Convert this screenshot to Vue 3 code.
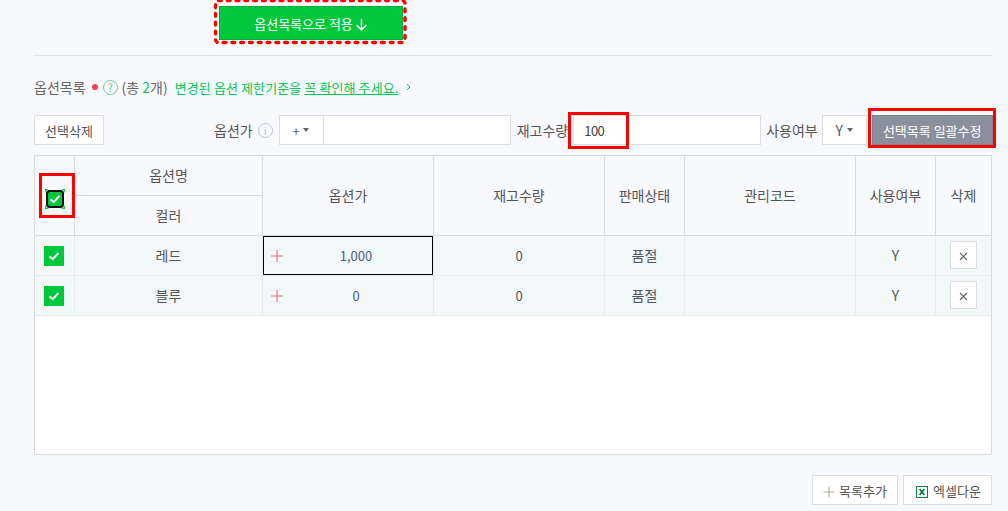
<template>
  <div class="page">
    <div class="apply-row">
      <div class="apply-wrap">
        <button class="apply-btn">옵션목록으로 적용
          <svg width="13" height="13" viewBox="0 0 12 12"><path d="M6 1v10M1.5 6.5 6 11l4.5-4.5" fill="none" stroke="#fff" stroke-width="1.4"/></svg>
        </button>
        <svg class="dash" width="198" height="48" viewBox="0 0 198 48"><rect x="3.5" y="1.5" width="189.5" height="42" rx="3" fill="none" stroke="#f00" stroke-width="3.4" stroke-dasharray="2.8 6" stroke-linecap="round"/></svg>
      </div>
    </div>

    <div class="title-row">
      <span class="title">옵션목록</span>
      <i class="dot"></i>
      <span class="help">?</span>
      <span class="count">(총 <em>2</em>개)</span>
      <span class="notice">변경된 옵션 제한기준을 <u>꼭 확인해 주세요.</u></span>
      <svg class="chev" width="5" height="8" viewBox="0 0 5 8"><path d="M1 1l3 3-3 3" fill="none" stroke="#06c755" stroke-width="1"/></svg>
    </div>

    <div class="toolbar">
      <button class="btn del-btn">선택삭제</button>
      <label class="lbl price-lbl">옵션가</label>
      <span class="info">i</span>
      <div class="sel sign-sel">+<i class="caret"></i></div>
      <div class="inp price-inp"></div>
      <label class="lbl stock-lbl">재고수량</label>
      <div class="inp stock-inp">100<span class="mark stock-mark"></span></div>
      <label class="lbl use-lbl">사용여부</label>
      <div class="sel use-sel">Y<i class="caret"></i></div>
      <div class="bulk-wrap">
        <button class="bulk-btn">선택목록 일괄수정</button>
        <span class="mark bulk-mark"></span>
      </div>
    </div>

    <div class="grid-box">
      <table class="grid">
        <colgroup>
          <col v-for="w in colWidths" :key="w.k" :style="{ width: w.w + 'px' }">
        </colgroup>
        <thead>
          <tr>
            <th rowspan="2" class="chk-cell">
              <div class="head-chk">
                <span class="chk focused"><svg width="14" height="14" viewBox="0 0 14 14"><path d="M2.5 7.2 5.7 10.2 11.5 3.9" fill="none" stroke="#fff" stroke-width="2"/></svg></span>
                <span class="mark chk-mark"></span>
              </div>
            </th>
            <th>옵션명</th>
            <th rowspan="2">옵션가</th>
            <th rowspan="2">재고수량</th>
            <th rowspan="2">판매상태</th>
            <th rowspan="2">관리코드</th>
            <th rowspan="2">사용여부</th>
            <th rowspan="2">삭제</th>
          </tr>
          <tr><th>컬러</th></tr>
        </thead>
        <tbody>
          <tr v-for="(r, i) in rows" :key="r.name">
            <td class="first">
              <span class="chk"><svg width="14" height="14" viewBox="0 0 14 14"><path d="M2.5 7.2 5.7 10.2 11.5 3.9" fill="none" stroke="#fff" stroke-width="2"/></svg></span>
            </td>
            <td>{{ r.name }}</td>
            <td class="price" :class="{ active: i === 0 }">
              <svg class="plus" width="12" height="12" viewBox="0 0 12 12"><path d="M6 0v12M0 6h12" stroke="#f0657d" stroke-width="1"/></svg>
              <span class="num">{{ r.price }}</span>
            </td>
            <td class="num">0</td>
            <td>품절</td>
            <td></td>
            <td>Y</td>
            <td class="x-cell"><button class="x-btn"><svg width="9" height="9" viewBox="0 0 9 9"><path d="M1 1l7 7M8 1 1 8" stroke="#666" stroke-width="1.1"/></svg></button></td>
          </tr>
        </tbody>
      </table>
    </div>

    <div class="bottom">
      <button class="btn add-btn"><svg width="12" height="12" viewBox="0 0 12 12"><path d="M6 .5v11M.5 6h11" stroke="#b5b09c" stroke-width="1.2"/></svg>목록추가</button>
      <button class="btn xls-btn">
        <svg width="12" height="12" viewBox="0 0 12 12"><rect x=".5" y=".5" width="11" height="11" fill="#fff" stroke="#107c41"/><path d="M3.6 3 8.4 9M8.4 3 3.6 9" stroke="#107c41" stroke-width="1.8"/></svg>엑셀다운
      </button>
    </div>
  </div>
</template>

<script setup>
const colWidths = [
  { k: 'chk', w: 39 }, { k: 'name', w: 188 }, { k: 'price', w: 171 }, { k: 'stock', w: 171 },
  { k: 'state', w: 80 }, { k: 'code', w: 171 }, { k: 'use', w: 80 }, { k: 'del', w: 56 }
]
const rows = [
  { name: '레드', price: '1,000' },
  { name: '블루', price: '0' }
]
</script>

<style>
html, body { margin: 0; background: #f8f9fd; }
</style>

<style scoped>
.page {
  width: 1008px;
  height: 511px;
  overflow: hidden;
  box-sizing: border-box;
  padding: 0 16px 0 34px;
  background: #f8f9fd;
  font-family: "Noto Sans CJK KR", "Noto Sans", sans-serif;
  font-size: 14px;
  color: #555;
}
button { font: inherit; font-size: 13px; cursor: pointer; }

.apply-row {
  border-bottom: 1px solid #e6e7ec;
  padding-left: 185px;
  height: 49px;
  padding-top: 6px;
}
.apply-wrap {
  position: relative;
  width: 184px;
  height: 34px;
}
.apply-btn {
  width: 100%;
  height: 100%;
  padding: 0;
  border: 1px solid #00a843;
  background: #00c73c;
  color: #fff;
}
.apply-btn svg { margin-left: -1px; vertical-align: -2px; }
.dash { position: absolute; left: -7px; top: -7px; pointer-events: none; }

.title-row {
  display: flex;
  align-items: center;
  height: 20px;
  margin-top: 21px;
}
.title { color: #666; }
.dot { width: 6px; height: 6px; border-radius: 50%; background: #f5405a; margin: 0 5px 0 6px; }
.help {
  box-sizing: border-box;
  width: 15px; height: 15px; border: 1px solid #6cc795; border-radius: 50%;
  color: #6cc795; font-size: 11px; line-height: 13px; text-align: center; margin-right: 4px;
}
.count { color: #666; }
.count em { font-style: normal; color: #06c755; }
.notice { color: #06c755; margin-left: 7px; font-size: 13px; letter-spacing: .1px; }
.chev { margin-left: 7px; }

.toolbar {
  display: flex;
  align-items: center;
  height: 30px;
  margin-top: 18px;
}
.toolbar > * { flex: none; }
.btn {
  height: 30px;
  box-sizing: border-box;
  background: #fff;
  border: 1px solid #dcdde2;
  color: #555;
  padding: 0;
}
.del-btn { width: 70px; }
.lbl { color: #555; }
.price-lbl { margin-left: 110px; }
.info {
  box-sizing: border-box;
  width: 15px; height: 15px; border: 1px solid #bcc5d3; border-radius: 50%;
  color: #bcc5d3; font-size: 11px; line-height: 13px; text-align: center; margin: 0 6px 0 5px;
}
.sel, .inp {
  position: relative;
  height: 30px;
  box-sizing: border-box;
  background: #fff;
  border: 1px solid #dcdde2;
  display: flex;
  align-items: center;
  color: #555;
}
.sel { justify-content: center; }
.caret {
  width: 0; height: 0; margin-left: 4px;
  border-style: solid;
  border-width: 4px 3.5px 0;
  border-color: #666 transparent transparent;
}
.sign-sel { width: 45px; font-size: 12px; }
.price-inp { width: 187px; border-left: 0; }
.stock-lbl { margin-left: 6px; }
.stock-inp { width: 188px; margin-left: 5px; padding-left: 10px; font-size: 13px; letter-spacing: -.5px; color: #444; }
.use-lbl { margin-left: 5px; }
.use-sel { width: 45px; margin-left: 4px; }
.mark { position: absolute; border: 3px solid #f00; box-sizing: border-box; pointer-events: none; }
.stock-mark { left: -6px; top: -4px; width: 61px; height: 37px; }
.bulk-wrap { position: relative; margin-left: 5px; }
.bulk-btn {
  display: block;
  width: 121px;
  height: 30px;
  border: 1px solid #7c8190;
  background: #8a8f9e;
  color: #fff;
  padding: 0;
}
.bulk-mark { left: -4px; top: -7px; width: 128px; height: 40px; }

.grid-box {
  margin-top: 10px;
  height: 300px;
  box-sizing: border-box;
  background: #fff;
  border: 1px solid #d8dae0;
}
.grid {
  border-collapse: collapse;
  table-layout: fixed;
  width: 956px;
}
.grid th, .grid td {
  text-align: center;
  padding: 0 0 0 1px;
  font-weight: 400;
  height: 40px;
  box-sizing: border-box;
}
.grid thead tr:first-child th { height: 39px; }
.grid th { background: #f8f9fd; border: 1px solid #d8dae0; color: #555; }
.grid td { background: #f2f8f7; border: 1px solid #e8ebee; color: #555; }
.grid tr > :first-child { border-left: 0; }
.grid thead tr:first-child th { border-top: 0; }
.grid tbody tr > :last-child { border-right: 0; }
.chk-cell { position: relative; }
.head-chk { position: relative; display: flex; justify-content: center; margin: 7px 0 0 1px; }
.chk {
  position: relative;
  display: inline-flex;
  align-items: center;
  justify-content: center;
  width: 20px;
  height: 20px;
  background: #00c73c;
  vertical-align: middle;
}
.first { padding: 0 !important; }
.x-cell { padding: 0 !important; }
.chk.focused::before {
  content: "";
  position: absolute;
  inset: 1px;
  border: 2px solid #111;
  border-radius: 4px;
  box-shadow: 0 0 0 1px #fff;
}
.chk-mark { left: 2px; top: -16px; width: 36px; height: 45px; }
.price { position: relative; padding-left: 17px !important; }
.price .plus { position: absolute; left: 8px; top: 14px; }
.price.active::after {
  content: "";
  position: absolute;
  top: 0;
  left: 0;
  right: 0;
  bottom: 0;
  border: 1px solid #000;
  pointer-events: none;
}
.num { color: #4a5f80; font-size: 13px; }
.x-btn {
  width: 27px;
  height: 28px;
  padding: 0;
  background: #fff;
  border: 1px solid #dcdde2;
  vertical-align: middle;
}

.bottom {
  display: flex;
  justify-content: flex-end;
  gap: 5px;
  margin-top: 20px;
}
.add-btn { width: 86px; }
.add-btn svg { margin-right: 4px; vertical-align: -2px; }
.xls-btn { width: 89px; padding-left: 2px; }
.xls-btn svg { margin-right: 5px; vertical-align: -2px; }
</style>
